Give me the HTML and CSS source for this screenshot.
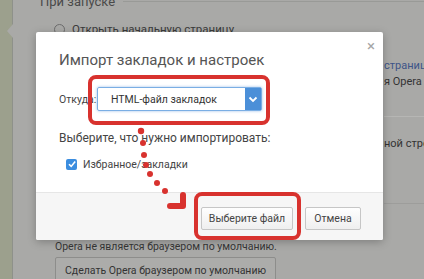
FILE: index.html
```html
<!DOCTYPE html>
<html lang="ru">
<head>
    <meta charset="UTF-8">
    <meta name="viewport" content="width=device-width, initial-scale=1.0">
    <title>Импорт закладок и настроек</title>
    <link rel="stylesheet" href="styles.css">
</head>
<body>
    <div class="page">
        <div class="sidebar">
            <span class="notch"></span>
        </div>
        <div class="settings">
            <div class="section-head">
                <span class="section-title">При запуске</span>
                <span class="section-line"></span>
            </div>
            <div class="radio-row">
                <span class="radio"></span>
                <span>Открыть начальную страницу</span>
            </div>
            <div class="side-text">
                <div class="side-link">страницу</div>
                <div class="side-line">я Opera Turbo</div>
                <div class="side-sep"></div>
                <div class="side-line lower">ной строки</div>
                <div class="side-sep second"></div>
            </div>
            <div class="default-block">
                <div class="default-note">Opera не является браузером по умолчанию.</div>
                <button class="bg-button">Сделать Opera браузером по умолчанию</button>
            </div>
        </div>

        <div class="dialog">
            <div class="dialog-body">
                <span class="close">&times;</span>
                <h1 class="dialog-title">Импорт закладок и настроек</h1>
                <div class="form-row">
                    <label class="form-label">Откуда:</label>
                    <div class="select">
                        <span class="select-text">HTML-файл закладок</span>
                        <span class="select-arrow">
                            <svg width="10" height="7" viewBox="0 0 10 7"><path d="M1.5 1.5 L5 5 L8.5 1.5" fill="none" stroke="#fff" stroke-width="1.8"/></svg>
                        </span>
                    </div>
                </div>
                <div class="choose-text">Выберите, что нужно импортировать:</div>
                <div class="check-row">
                    <span class="checkbox">
                        <svg width="10" height="10" viewBox="0 0 10 10"><path d="M2 5.2 L4.2 7.4 L8.2 2.6" fill="none" stroke="#fff" stroke-width="1.6"/></svg>
                    </span>
                    <span>Избранное/закладки</span>
                </div>
            </div>
            <div class="dialog-footer">
                <button class="btn btn-file">Выберите файл</button>
                <button class="btn btn-cancel">Отмена</button>
            </div>
        </div>

        <div class="mark mark-select"></div>
        <div class="mark mark-button"></div>
        <svg class="arrow" width="424" height="279" viewBox="0 0 424 279">
            <g fill="#d8322e">
                <circle cx="141" cy="131" r="3.2"/>
                <circle cx="143" cy="143" r="3"/>
                <circle cx="144" cy="155" r="3"/>
                <circle cx="146" cy="165" r="3"/>
                <circle cx="150" cy="174" r="3"/>
                <circle cx="157" cy="183" r="3"/>
                <circle cx="165" cy="191" r="3"/>
            </g>
            <path d="M170 206 L183 206 L183 195" fill="none" stroke="#d8322e" stroke-width="6" stroke-linecap="round" stroke-linejoin="round"/>
        </svg>
    </div>
</body>
</html>
```

FILE: styles.css
```css
body {
    margin: 0;
    font-family: Roboto, "Noto Sans", Arial, sans-serif;
    color: #333;
}

.page {
    position: relative;
    display: flex;
    width: 424px;
    height: 279px;
    overflow: hidden;
    background: #a9a9a7;
}

.sidebar {
    position: relative;
    width: 12px;
    flex-shrink: 0;
    background: #9ca08d;
    border-right: 1px solid #8e918a;
}

.notch {
    position: absolute;
    top: 24px;
    right: -1px;
    width: 0;
    height: 0;
    border-top: 7px solid transparent;
    border-bottom: 7px solid transparent;
    border-right: 6px solid #a9a9a7;
}

.settings {
    position: relative;
    flex: 1;
    padding-left: 27px;
}

.section-head {
    display: flex;
    align-items: center;
    gap: 8px;
    margin-top: -9px;
    height: 20px;
}

.section-title {
    font-size: 13px;
    color: #4a4a4a;
}

.section-line {
    flex: 1;
    height: 1px;
    background: #999a97;
}

.radio-row {
    display: flex;
    align-items: center;
    gap: 7px;
    margin-top: 11px;
    margin-left: 14px;
    font-size: 11.5px;
    color: #3a3a3a;
}

.radio {
    width: 9px;
    height: 9px;
    border: 1px solid #6c6c6c;
    border-radius: 50%;
}

.side-text {
    position: absolute;
    left: 371px;
    top: 59px;
    width: 60px;
    font-size: 11px;
    color: #333;
    white-space: nowrap;
}

.side-link {
    color: #3d5488;
    height: 16px;
}

.side-line {
    height: 16px;
}

.side-sep {
    height: 1px;
    margin-top: 25px;
    background: #b6b6b4;
}

.side-line.lower {
    margin-top: 20px;
}

.side-sep.second {
    margin-top: 50px;
    background: #9d9d9b;
}

.default-block {
    position: absolute;
    left: 42px;
    top: 240px;
}

.default-note {
    font-size: 10.5px;
    color: #363636;
    height: 17px;
}

.bg-button {
    height: 26px;
    padding: 0 9px;
    font-family: inherit;
    font-size: 10.5px;
    color: #333;
    white-space: nowrap;
    background: #acacaa;
    border: 1px solid #8d8d8b;
    border-radius: 2px;
}

.dialog {
    position: absolute;
    left: 36px;
    top: 32px;
    width: 347px;
    height: 208px;
    display: flex;
    flex-direction: column;
    background: #fff;
    border-radius: 2px;
    box-shadow: 0 2px 8px rgba(0, 0, 0, 0.25);
}

.dialog-body {
    position: relative;
    flex: 1;
    padding: 17px 23px 0;
}

.close {
    position: absolute;
    right: 8px;
    top: 5px;
    font-size: 15px;
    color: #a6a6a6;
}

.dialog-title {
    margin: 0;
    font-size: 15px;
    font-weight: normal;
    line-height: 22px;
    color: #555;
}

.form-row {
    display: flex;
    align-items: center;
    margin-top: 16px;
    color: #444;
}

.form-label {
    width: 38px;
    font-size: 10.5px;
}

.select {
    display: flex;
    align-items: center;
    width: 163px;
    height: 22px;
    border: 1px solid #7aaee4;
    border-radius: 2px;
    box-shadow: 0 0 3px rgba(90, 150, 220, 0.6);
}

.select-text {
    flex: 1;
    padding-left: 13px;
    font-size: 10.5px;
    color: #333;
}

.select-arrow {
    display: flex;
    align-items: center;
    justify-content: center;
    width: 16px;
    height: 22px;
    background: #4b8fd8;
}

.choose-text {
    margin-top: 18px;
    font-size: 12px;
    line-height: 18px;
    color: #444;
}

.check-row {
    display: flex;
    align-items: center;
    gap: 6px;
    margin-top: 9px;
    margin-left: 7px;
    height: 16px;
    font-size: 10.5px;
    color: #444;
}

.checkbox {
    display: flex;
    align-items: center;
    justify-content: center;
    width: 11px;
    height: 11px;
    border-radius: 2px;
    background: #3b8ddf;
}

.dialog-footer {
    display: flex;
    justify-content: flex-end;
    gap: 12px;
    height: 48px;
    padding: 14px 22px 0 0;
    box-sizing: border-box;
    background: #f6f6f6;
    border-top: 1px solid #e6e6e6;
    border-radius: 0 0 2px 2px;
}

.btn {
    height: 23px;
    padding: 0;
    font-family: inherit;
    font-size: 10.5px;
    color: #444;
    white-space: nowrap;
    background: linear-gradient(#fefefe, #efefef);
    border: 1px solid #c6c6c6;
    border-radius: 2px;
}

.btn-file {
    width: 92px;
}

.btn-cancel {
    width: 56px;
}

.mark {
    position: absolute;
    border: 4px solid #d8322e;
    border-radius: 8px;
    box-sizing: border-box;
}

.mark-select {
    left: 88px;
    top: 75px;
    width: 182px;
    height: 50px;
}

.mark-button {
    left: 194px;
    top: 192px;
    width: 107px;
    height: 48px;
}

.arrow {
    position: absolute;
    left: 0;
    top: 0;
}
```
